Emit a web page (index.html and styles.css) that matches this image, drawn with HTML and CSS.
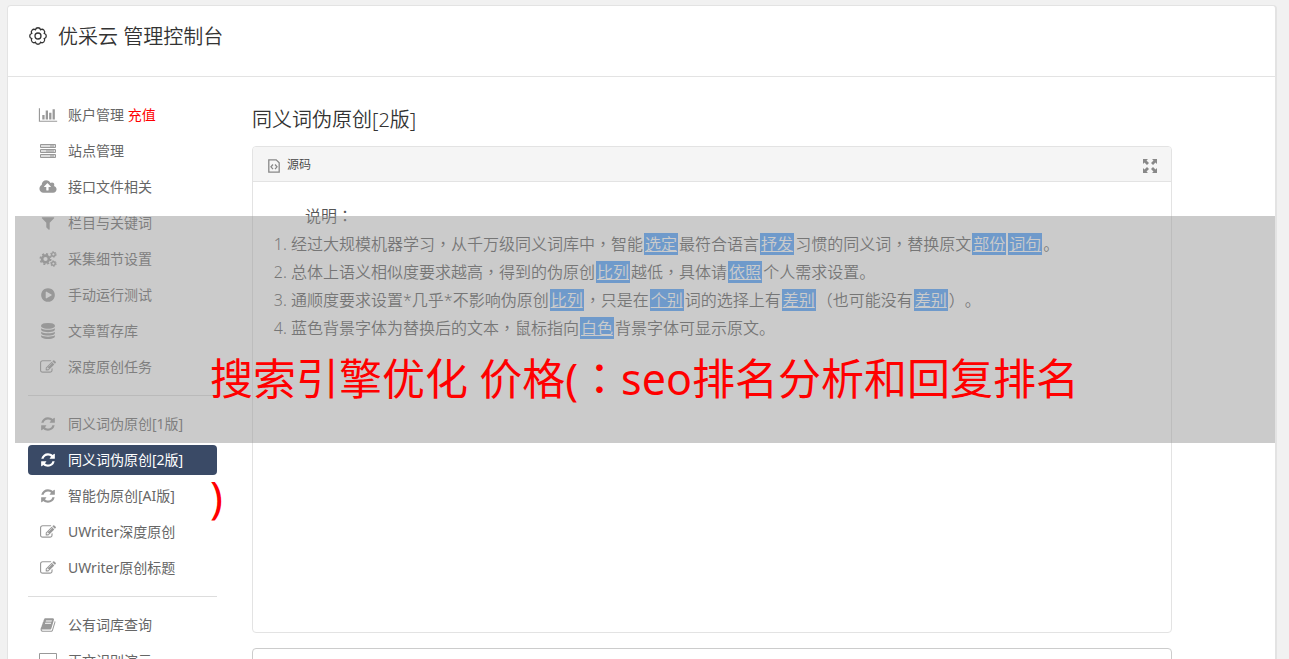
FILE: index.html
```
<!DOCTYPE html>
<html lang="zh-CN">
<head>
<meta charset="utf-8">
<title>优采云 管理控制台</title>
<link rel="stylesheet" href="styles.css">
</head>
<body>
<svg class="sprite" aria-hidden="true">
  <symbol id="refresh" viewBox="0 0 1792 1792"><path d="M1639 1056q0 5-1 7-64 268-268 434.5t-478 166.5q-146 0-282.5-55t-243.5-157l-129 129q-19 19-45 19t-45-19-19-45v-448q0-26 19-45t45-19h448q26 0 45 19t19 45-19 45l-137 137q71 66 161 102t187 36q134 0 250-65t186-179q11-17 53-117 8-23 30-23h192q13 0 22.5 9.5t9.5 22.5zm25-800v448q0 26-19 45t-45 19h-448q-26 0-45-19t-19-45 19-45l138-138q-148-137-349-137-134 0-250 65t-186 179q-11 17-53 117-8 23-30 23h-199q-13 0-22.5-9.5t-9.5-22.5v-7q65-268 270-434.5t480-166.5q146 0 284 55.5t245 156.5l130-129q19-19 45-19t45 19 19 45z"/></symbol>
  <symbol id="edit" viewBox="0 0 1792 1792"><path d="M888 1184l116-116-152-152-116 116v56h96v96h56zm440-720q-16-16-33 1l-350 350q-17 17-1 33t33-1l350-350q17-17 1-33zm80 594v190q0 119-84.5 203.5t-203.5 84.5h-832q-119 0-203.5-84.5t-84.5-203.5v-832q0-119 84.5-203.5t203.5-84.5h832q63 0 117 25 15 7 18 23 3 17-9 29l-49 49q-14 14-32 8-23-6-45-6h-832q-66 0-113 47t-47 113v832q0 66 47 113t113 47h832q66 0 113-47t47-113v-126q0-13 9-22l64-64q15-15 35-7t20 29zm-96-738l288 288-672 672h-288v-288zm444 132l-92 92-288-288 92-92q28-28 68-28t68 28l152 152q28 28 28 68t-28 68z"/></symbol>
</svg>
<div class="panel">
  <header class="panel-header">
    <svg class="gear" viewBox="0 0 20 20"><path d="M16.3 12.6A2.7 2.7 0 0 1 12.6 16.3A2.700 2.700 0 0 1 7.400 16.300A2.700 2.700 0 0 1 3.700 12.600A2.700 2.700 0 0 1 3.700 7.400A2.700 2.700 0 0 1 7.400 3.700A2.700 2.700 0 0 1 12.600 3.700A2.700 2.700 0 0 1 16.300 7.400A2.700 2.700 0 0 1 16.300 12.600Z"/><circle cx="10" cy="10" r="3"/></svg>
    <h1 class="panel-title">优采云 管理控制台</h1>
  </header>
  <div class="panel-body">
    <nav class="sidebar">
      <a class="item" href="#"><svg class="icon" viewBox="0 0 2048 1792"><path d="M640 896v512h-256v-512h256zm384-512v1024h-256v-1024h256zm1024 1152v128h-2048v-1536h128v1408h1920zm-640-896v768h-256v-768h256zm384-384v1152h-256v-1152h256z"/></svg><span>账户管理 <span class="recharge">充值</span></span></a>
      <a class="item" href="#"><svg class="icon server" viewBox="0 0 18 16"><path class="bays" d="M1.500 1.500h15v3h-15zM1.500 6.500h15v3h-15zM1.500 11.500h15v3h-15z"/><path d="M11 3h4M7 8h8M11 13h4"/></svg><span>站点管理</span></a>
      <a class="item" href="#"><svg class="icon" viewBox="-128 0 2048 1792"><path d="M1216 864q0-14-9-23l-352-352q-9-9-23-9t-23 9l-351 351q-10 12-10 24 0 14 9 23t23 9h224v352q0 13 9.5 22.5t22.5 9.5h192q13 0 22.5-9.5t9.5-22.5v-352h224q13 0 22.5-9.5t9.5-22.5zm640 288q0 159-112.5 271.5t-271.5 112.5h-1088q-185 0-316.5-131.5t-131.5-316.5q0-130 70-240t188-165q-2-30-2-43 0-212 150-362t362-150q156 0 285.5 87t188.5 231q71-62 166-62 106 0 181 75t75 181q0 76-41 138 130 31 213.5 135.5t83.5 238.5z"/></svg><span>接口文件相关</span></a>
      <a class="item" href="#"><svg class="icon" viewBox="0 0 1792 1792"><path d="M1595 295q17 41-14 70l-493 493v742q0 42-39 59-13 5-25 5-27 0-45-19l-256-256q-19-19-19-45v-486l-493-493q-31-29-14-70 17-39 59-39h1280q42 0 59 39z"/></svg><span>栏目与关键词</span></a>
      <a class="item" href="#"><svg class="icon cogs" viewBox="0 0 18 16"><circle cx="6.5" cy="8" r="3.4" stroke-width="2.6"/><circle cx="6.5" cy="8" r="5.2" stroke-width="1.6" stroke-dasharray="2.04 2.04"/><circle cx="14.4" cy="3.4" r="1.8" stroke-width="1.4"/><circle cx="14.4" cy="3.4" r="2.8" stroke-width="1" stroke-dasharray="1.47 1.46"/><circle cx="14.4" cy="12.6" r="1.8" stroke-width="1.4"/><circle cx="14.4" cy="12.6" r="2.8" stroke-width="1" stroke-dasharray="1.47 1.46"/></svg><span>采集细节设置</span></a>
      <a class="item" href="#"><svg class="icon" viewBox="0 0 1792 1792"><path d="M896 128q209 0 385.5 103t279.5 279.5 103 385.5-103 385.5-279.5 279.5-385.5 103-385.5-103-279.5-279.5-103-385.5 103-385.5 279.5-279.5 385.5-103zm384 823q32-18 32-55t-32-55l-544-320q-31-19-64-1-32 19-32 56v640q0 37 32 56 16 8 32 8 17 0 32-9z"/></svg><span>手动运行测试</span></a>
      <a class="item" href="#"><svg class="icon" viewBox="0 0 1792 1792"><path d="M896 768q237 0 443-43t325-127v170q0 69-103 128t-280 93.5-385 34.5-385-34.5-280-93.5-103-128v-170q119 84 325 127t443 43zm0 768q237 0 443-43t325-127v170q0 69-103 128t-280 93.5-385 34.5-385-34.5-280-93.5-103-128v-170q119 84 325 127t443 43zm0-384q237 0 443-43t325-127v170q0 69-103 128t-280 93.5-385 34.5-385-34.5-280-93.5-103-128v-170q119 84 325 127t443 43zm0-1152q208 0 385 34.5t280 93.5 103 128v128q0 69-103 128t-280 93.5-385 34.5-385-34.5-280-93.5-103-128v-128q0-69 103-128t280-93.5 385-34.5z"/></svg><span>文章暂存库</span></a>
      <a class="item" href="#"><svg class="icon"><use href="#edit"/></svg><span>深度原创任务</span></a>
      <hr class="divider">
      <a class="item" href="#"><svg class="icon"><use href="#refresh"/></svg><span>同义词伪原创[1版]</span></a>
      <a class="item active" href="#" aria-current="page"><svg class="icon"><use href="#refresh"/></svg><span>同义词伪原创[2版]</span></a>
      <a class="item" href="#"><svg class="icon"><use href="#refresh"/></svg><span>智能伪原创[AI版]</span></a>
      <a class="item" href="#"><svg class="icon"><use href="#edit"/></svg><span>UWriter深度原创</span></a>
      <a class="item" href="#"><svg class="icon"><use href="#edit"/></svg><span>UWriter原创标题</span></a>
      <hr class="divider">
      <a class="item" href="#"><svg class="icon" viewBox="0 0 1792 1792"><path d="M1703 478q40 57 18 129l-275 906q-19 64-76.5 107.5t-122.5 43.5h-923q-77 0-148.5-53.5t-99.5-131.5q-24-67-2-127 0-4 3-27t4-37q1-8-3-21.5t-3-19.5q2-11 8-21t16.5-23.5 16.5-23.5q23-38 45-91.5t30-91.5q3-10 .5-30t-.5-28q3-11 17-28t17-23q21-36 42-92t25-90q1-9-2.5-32t.5-28q4-13 22-30.5t22-22.5q19-26 42.5-84.5t27.5-96.5q1-8-3-25.5t-2-26.5q2-8 9-18t18-23 17-21q8-12 16.5-30.5t15-35 16-36 19.5-32 26.5-23.5 36-11.5 47.5 5.5l-1 3q38-9 51-9h761q74 0 114 56t18 130l-274 906q-36 119-71.5 153.5t-128.5 34.5h-869q-27 0-38 15-11 16-1 43 24 70 144 70h923q29 0 56-15.5t35-41.5l300-987q7-22 5-57 38 15 59 43zm-1064 2q-4 13 2 22.5t20 9.5h608q13 0 25.5-9.5t16.5-22.5l21-64q4-13-2-22.5t-20-9.5h-608q-13 0-25.5 9.5t-16.5 22.5zm-83 256q-4 13 2 22.5t20 9.5h608q13 0 25.5-9.5t16.5-22.5l21-64q4-13-2-22.5t-20-9.5h-608q-13 0-25.5 9.5t-16.5 22.5z"/></svg><span>公有词库查询</span></a>
      <a class="item" href="#"><svg class="icon" viewBox="0 0 18 16"><path fill-rule="evenodd" d="M1 0h16a1 1 0 0 1 1 1v11a1 1 0 0 1-1 1h-5v3H6v-3H1a1 1 0 0 1-1-1V1a1 1 0 0 1 1-1zM1 1v9h16V1z"/></svg><span>正文识别演示</span></a>
    </nav>
    <main class="content">
      <h2 class="content-title">同义词伪原创[2版]</h2>
      <section class="editor">
        <div class="toolbar">
          <button class="tool" type="button"><svg class="source" viewBox="0 0 12 14"><path d="M.8.8h7.4l3 3v9.4H.8zM5 5.5L3 7.8l2 2.4M7 5.5l2 2.3-2 2.4"/></svg><span>源码</span></button>
          <button class="tool" type="button" aria-label="最大化"><svg class="expand" viewBox="0 0 14 14"><path d="M0 0h5L3.500 1.500 6 4 4 6 1.500 3.500 0 5zM14 0v5l-1.500-1.500L10 6 8 4l2.500-2.500L9 0zM0 14V9l1.500 1.500L4 8l2 2-2.500 2.500L5 14zM14 14H9l1.500-1.500L8 10l2-2 2.500 2.500L14 9z"/></svg></button>
        </div>
        <div class="document">
          <p class="lead">说明<span class="mark" lang="zh-TW">：</span></p>
          <ol class="notes">
            <li>经过大规模机器学习<span class="mark" lang="zh-TW">，</span>从千万级同义词库中<span class="mark" lang="zh-TW">，</span>智能<u class="word">选定</u>最符合语言<u class="word">抒发</u>习惯的同义词<span class="mark" lang="zh-TW">，</span>替换原文<u class="word">部份</u><u class="word">词句</u>。</li>
            <li>总体上语义相似度要求越高<span class="mark" lang="zh-TW">，</span>得到的伪原创<u class="word">比列</u>越低<span class="mark" lang="zh-TW">，</span>具体请<u class="word">依照</u>个人需求设置。</li>
            <li>通顺度要求设置*几乎*不影响伪原创<u class="word">比列</u><span class="mark" lang="zh-TW">，</span>只是在<u class="word">个别</u>词的选择上有<u class="word">差别</u>（也可能没有<u class="word">差别</u><span class="mark" lang="zh-TW">）</span>。</li>
            <li>蓝色背景字体为替换后的文本<span class="mark" lang="zh-TW">，</span>鼠标指向<u class="word">白色</u>背景字体可显示原文。</li>
          </ol>
        </div>
      </section>
      <textarea class="result" aria-label="结果"></textarea>
    </main>
  </div>
</div>
<div class="banner"><p class="banner-text">搜索引擎优化 价格(<span class="mark" lang="zh-TW">：</span>seo排名分析和回复排名<br>)</p></div>
</body>
</html>
```
FILE: styles.css
```
* { box-sizing: border-box; }
body {
  position: relative;
  height: 100vh;
  margin: 0;
  padding: 5px 12px 0 7px;
  overflow: hidden;
  background: #f1f1f1;
  color: #555;
  font-family: "Noto Sans", "Noto Sans CJK SC", sans-serif;
  font-size: 14px;
  font-weight: 350;
  text-spacing-trim: space-all;
}
h1, h2, p, ol { margin: 0; font-weight: 350; }
.sprite { display: none; }
.panel {
  background: #fff;
  border: 1px solid #e3e3e3;
  border-right-width: 2px;
  border-radius: 4px;
}
.panel-header {
  display: flex;
  align-items: center;
  gap: 10px;
  height: 71px;
  padding: 0 20px 8px;
  border-bottom: 1px solid #e3e3e3;
}
.gear { width: 20px; height: 20px; margin-bottom: 2px; fill: none; stroke: #333; stroke-width: 1.3; }
.panel-title { color: #333; font-size: 20px; line-height: 30px; }
.panel-body { display: flex; gap: 35px; padding: 23px 20px 20px; }
.sidebar { display: flex; flex: 0 0 189px; flex-direction: column; gap: 6px; }
.item {
  display: grid;
  grid-template-columns: 20px 1fr;
  align-items: center;
  gap: 10px;
  height: 30px;
  padding: 0 10px;
  border-radius: 4px;
  color: #666;
  font-weight: 400;
  line-height: 20px;
  text-decoration: none;
  white-space: nowrap;
}
.icon { width: 20px; height: 16px; fill: #999; }
.cogs { fill: none; stroke: #999; }
.server { fill: none; stroke: #999; }
.bays { fill: #ddd; }
.active { background: #3a4a66; color: #fff; }
.active .icon { fill: #fff; }
.recharge { color: #f00; }
.divider { width: 100%; height: 1px; margin: 7px 0; border: 0; background: #ddd; }
.content { flex: 1; min-width: 0; max-width: 920px; padding-top: 5px; }
.content-title { margin-bottom: 11px; color: #333; font-size: 20px; line-height: 30px; }
.editor { min-height: 487px; border: 1px solid #e3e3e3; border-radius: 4px; overflow: hidden; }
.toolbar {
  display: flex;
  align-items: center;
  justify-content: space-between;
  height: 35px;
  padding: 0 14px 0 15px;
  background: #f5f5f5;
  border-bottom: 1px solid #e3e3e3;
}
.tool {
  display: flex;
  align-items: center;
  gap: 7px;
  padding: 0;
  border: 0;
  background: none;
  color: #444;
  font: inherit;
  font-size: 12px;
}
.source { width: 12px; height: 14px; margin-top: 3px; fill: none; stroke: #888; stroke-width: 1.3; }
.expand { width: 14px; height: 14px; margin-top: 4px; fill: #888; }
.document { padding: 20px; font-size: 16px; line-height: 28px; }
.lead { text-indent: 2em; }
.notes { padding-left: 18px; }
.mark { font-family: "Noto Sans CJK TC", sans-serif; line-height: 1; }
.word {
  margin: 0 1px;
  padding: 0 1px;
  background: #479dff;
  color: #fff;
}
.result {
  display: block;
  width: 100%;
  height: 120px;
  margin-top: 15px;
  border: 1px solid #ccc;
  border-radius: 4px;
  resize: none;
}
.banner {
  position: absolute;
  top: 216px;
  right: 14px;
  left: 15px;
  height: 227px;
  padding: 104px 190px 0 195px;
  background: rgba(151, 151, 151, .5);
}
.banner-text { color: #f00; font-size: 43px; font-weight: 400; line-height: 118px; white-space: nowrap; }
```
